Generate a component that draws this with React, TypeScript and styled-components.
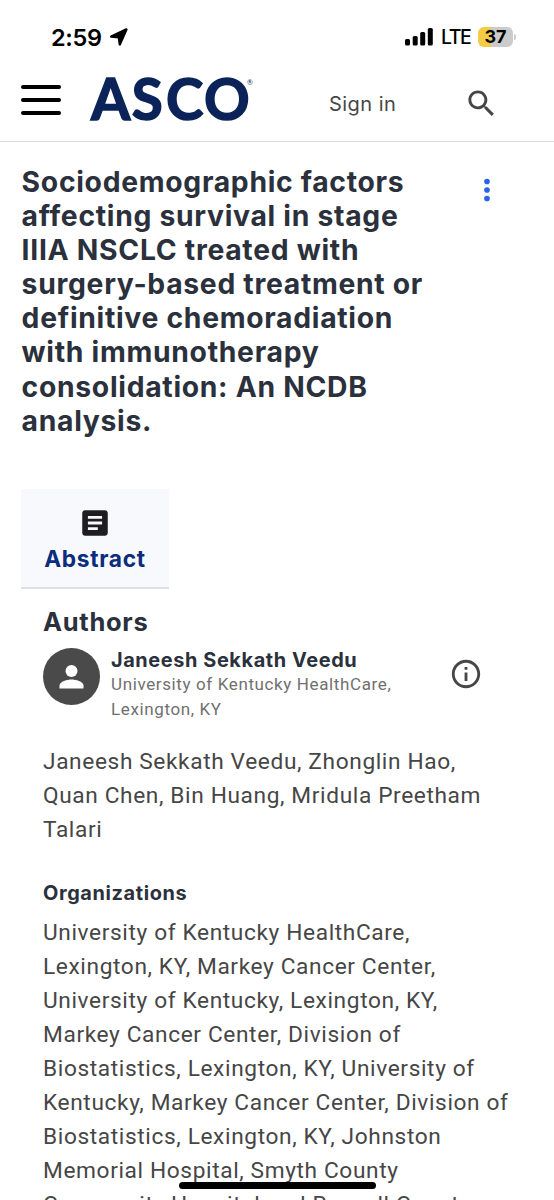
import React from "react";
import styled, { createGlobalStyle } from "styled-components";

const GlobalStyle = createGlobalStyle`
  * { box-sizing: border-box; }
  html, body { margin: 0; padding: 0; background: #fff; }
  body { height: 1200px; overflow: hidden; }
`;

const Screen = styled.div`
  position: relative;
  width: 554px;
  height: 1200px;
  overflow: hidden;
  background: #fff;
  font-family: Roboto, "Liberation Sans", sans-serif;
  color: #464646;
`;

const StatusBar = styled.div`
  display: flex;
  align-items: center;
  height: 74px;
  padding: 0 38px 0 51px;
  color: #000;
  font-family: Inter, sans-serif;
`;

const Clock = styled.span`
  font-size: 23.5px;
  font-weight: 600;
  letter-spacing: -0.3px;
  width: 59px;
  white-space: nowrap;
`;

const StatusRight = styled.div`
  display: flex;
  align-items: center;
  margin-left: auto;
`;

const Network = styled.span`
  font-size: 19.5px;
  font-weight: 500;
  letter-spacing: -1.5px;
  width: 37px;
  margin-left: 8px;
  white-space: nowrap;
`;

const Battery = styled.div`
  width: 35px;
  height: 20px;
  border-radius: 6px;
  background: linear-gradient(90deg, #f3cb45 0 13px, #cbcbcb 13px);
  font-size: 18px;
  font-weight: 700;
  line-height: 20px;
  text-align: center;
`;

const BatteryCap = styled.span`
  width: 2px;
  height: 6px;
  margin-left: 1px;
  border-radius: 0 2px 2px 0;
  background: #cbcbcb;
`;

const Header = styled.header`
  display: flex;
  align-items: flex-start;
  height: 68px;
  padding-left: 21px;
  border-bottom: 1px solid #dcdcdc;
`;

const MenuButton = styled.div`
  display: flex;
  flex-direction: column;
  gap: 9px;
  width: 40px;
  margin-top: 11px;
`;

const MenuBar = styled.span`
  height: 4px;
  border-radius: 2px;
  background: #000;
`;

const Logo = styled.svg`
  width: 170px;
  height: 60px;
  margin-left: 28px;
  overflow: visible;
  font-family: Lato, sans-serif;
`;

const SignIn = styled.span`
  width: 80px;
  margin: 16px 0 0 70px;
  font-family: Inter, sans-serif;
  font-size: 20px;
  line-height: 28px;
  letter-spacing: 0.45px;
  white-space: nowrap;
`;

const SearchIcon = styled.svg`
  width: 35px;
  height: 35px;
  margin: 12px 0 0 55px;
`;

const TitleRow = styled.section`
  display: flex;
  padding: 23px 0 0 21.6px;
`;

const Title = styled.h1`
  width: 448.4px;
  margin: 0;
  font-family: Inter, sans-serif;
  font-size: 28.3px;
  font-weight: 700;
  line-height: 34.1px;
  letter-spacing: 0.7px;
  color: #2b303d;
  white-space: pre-line;
`;

const MoreIcon = styled.svg`
  width: 34px;
  height: 34px;
  margin-top: 8px;
`;

const Tab = styled.div`
  display: flex;
  flex-direction: column;
  align-items: center;
  width: 148px;
  height: 100px;
  margin: 51px 0 0 21px;
  padding-top: 17px;
  background: #f8f9fd;
  border-bottom: 2px solid #dfe0e3;
`;

const TabIcon = styled.svg`
  width: 34px;
  height: 34px;
`;

const TabLabel = styled.span`
  margin-top: 4px;
  font-family: Inter, sans-serif;
  font-size: 22.7px;
  font-weight: 700;
  line-height: 30px;
  letter-spacing: 0.7px;
  color: #0c2c7c;
`;

const Content = styled.main`
  padding: 15px 0 0 43px;
`;

const Heading = styled.h2<{ $small?: boolean }>`
  margin: ${(p) => (p.$small ? "32px 0 8.7px" : "0")};
  font-family: Inter, sans-serif;
  font-size: ${(p) => (p.$small ? "19.9px" : "25.5px")};
  font-weight: 700;
  line-height: ${(p) => (p.$small ? "28px" : "36px")};
  letter-spacing: ${(p) => (p.$small ? "0.62px" : "0.7px")};
  color: #2b303d;
`;

const Author = styled.div`
  display: flex;
  align-items: flex-start;
  height: 105px;
  padding-top: 6px;
`;

const Avatar = styled.svg`
  flex: none;
  width: 57px;
  height: 57px;
  margin-top: 2px;
`;

const AuthorText = styled.div`
  width: 338px;
  margin: 2px 0 0 11px;
`;

const AuthorName = styled.div`
  font-family: Inter, sans-serif;
  font-size: 19.9px;
  font-weight: 700;
  line-height: 24px;
  letter-spacing: 0.6px;
  color: #2b303d;
`;

const Affiliation = styled.div`
  font-size: 17px;
  line-height: 25.5px;
  letter-spacing: 0.62px;
  color: #707070;
  white-space: pre-line;
`;

const InfoIcon = styled.svg`
  width: 34px;
  height: 34px;
  margin-top: 11px;
`;

const Paragraph = styled.p`
  margin: 0;
  font-size: 22.7px;
  line-height: 34.1px;
  letter-spacing: 0.62px;
  white-space: pre;
`;

const HomeIndicator = styled.div`
  position: absolute;
  left: 179px;
  top: 1181.5px;
  width: 197px;
  height: 7px;
  border-radius: 4px;
  background: #000;
`;

const title = `Sociodemographic factors
affecting survival in stage
IIIA NSCLC treated with
surgery-based treatment or
definitive chemoradiation
with immunotherapy
consolidation: An NCDB
analysis.`;

const authors = `Janeesh Sekkath Veedu, Zhonglin Hao,
Quan Chen, Bin Huang, Mridula Preetham
Talari`;

const organizations = `University of Kentucky HealthCare,
Lexington, KY, Markey Cancer Center,
University of Kentucky, Lexington, KY,
Markey Cancer Center, Division of
Biostatistics, Lexington, KY, University of
Kentucky, Markey Cancer Center, Division of
Biostatistics, Lexington, KY, Johnston
Memorial Hospital, Smyth County
Community Hospital and Russell County`;

export default function App() {
  return (
    <>
      <GlobalStyle />
      <Screen>
        <StatusBar>
          <Clock>2:59</Clock>
          <svg width="18" height="18" viewBox="0 0 18 18">
            <path d="M16.4 1.4 9.8 16.4 8.8 9.3 1.2 8.6Z" stroke="#000" strokeWidth="2.4" strokeLinejoin="round" />
          </svg>
          <StatusRight>
            <svg width="28" height="18" viewBox="0 0 28 18">
              <rect x="0" y="11" width="5" height="6.5" rx="1.5" />
              <rect x="7.7" y="8" width="5" height="9.5" rx="1.5" />
              <rect x="15.2" y="4" width="5" height="13.5" rx="1.5" />
              <rect x="22.8" y="0" width="5" height="17.5" rx="1.5" />
            </svg>
            <Network>LTE</Network>
            <Battery>37</Battery>
            <BatteryCap />
          </StatusRight>
        </StatusBar>
        <Header>
          <MenuButton>
            <MenuBar />
            <MenuBar />
            <MenuBar />
          </MenuButton>
          <Logo viewBox="0 0 170 60" fill="#0b2358">
            <text y="46" x="2 42.8 77 115" fontSize="56.5" fontWeight="700" stroke="#0b2358" strokeWidth="1.5">ASCO</text>
            <text y="11" x="158" fontSize="7">®</text>
          </Logo>
          <SignIn>Sign in</SignIn>
          <SearchIcon viewBox="0 0 24 24" fill="#464646">
            <path d="M15.5 14h-.79l-.28-.27C15.41 12.59 16 11.11 16 9.5 16 5.91 13.09 3 9.5 3S3 5.91 3 9.5 5.91 16 9.5 16c1.61 0 3.09-.59 4.23-1.57l.27.28v.79l5 4.99L20.49 19l-4.99-5zm-6 0C7.01 14 5 11.99 5 9.5S7.01 5 9.5 5 14 7.01 14 9.5 11.99 14 9.5 14z" />
          </SearchIcon>
        </Header>
        <TitleRow>
          <Title>{title}</Title>
          <MoreIcon viewBox="0 0 24 24" fill="#2962ea">
            <circle cx="12" cy="6" r="2" />
            <circle cx="12" cy="12" r="2" />
            <circle cx="12" cy="18" r="2" />
          </MoreIcon>
        </TitleRow>
        <Tab>
          <TabIcon viewBox="0 0 24 24" fill="#1e1e20">
            <path d="M19 3H5c-1.1 0-2 .9-2 2v14c0 1.1.9 2 2 2h14c1.1 0 2-.9 2-2V5c0-1.1-.9-2-2-2zm-5 14H7v-2h7v2zm3-4H7v-2h10v2zm0-4H7V7h10v2z" />
          </TabIcon>
          <TabLabel>Abstract</TabLabel>
        </Tab>
        <Content>
          <Heading>Authors</Heading>
          <Author>
            <Avatar viewBox="0 0 57 57">
              <circle cx="28.5" cy="28.5" r="28.5" fill="#4a4a4a" />
              <circle cx="28.5" cy="23" r="6" fill="#fff" />
              <path d="M16.5 40.5v-3c0-4 8-6 12-6s12 2 12 6v3z" fill="#fff" />
            </Avatar>
            <AuthorText>
              <AuthorName>Janeesh Sekkath Veedu</AuthorName>
              <Affiliation>{"University of Kentucky HealthCare,\nLexington, KY"}</Affiliation>
            </AuthorText>
            <InfoIcon viewBox="0 0 24 24" fill="#464646">
              <path d="M11 7h2v2h-2zm0 4h2v6h-2zm1-9C6.48 2 2 6.48 2 12s4.48 10 10 10 10-4.48 10-10S17.52 2 12 2zm0 18c-4.41 0-8-3.59-8-8s3.59-8 8-8 8 3.59 8 8-3.59 8-8 8z" />
            </InfoIcon>
          </Author>
          <Paragraph>{authors}</Paragraph>
          <Heading $small>Organizations</Heading>
          <Paragraph>{organizations}</Paragraph>
        </Content>
        <HomeIndicator />
      </Screen>
    </>
  );
}
